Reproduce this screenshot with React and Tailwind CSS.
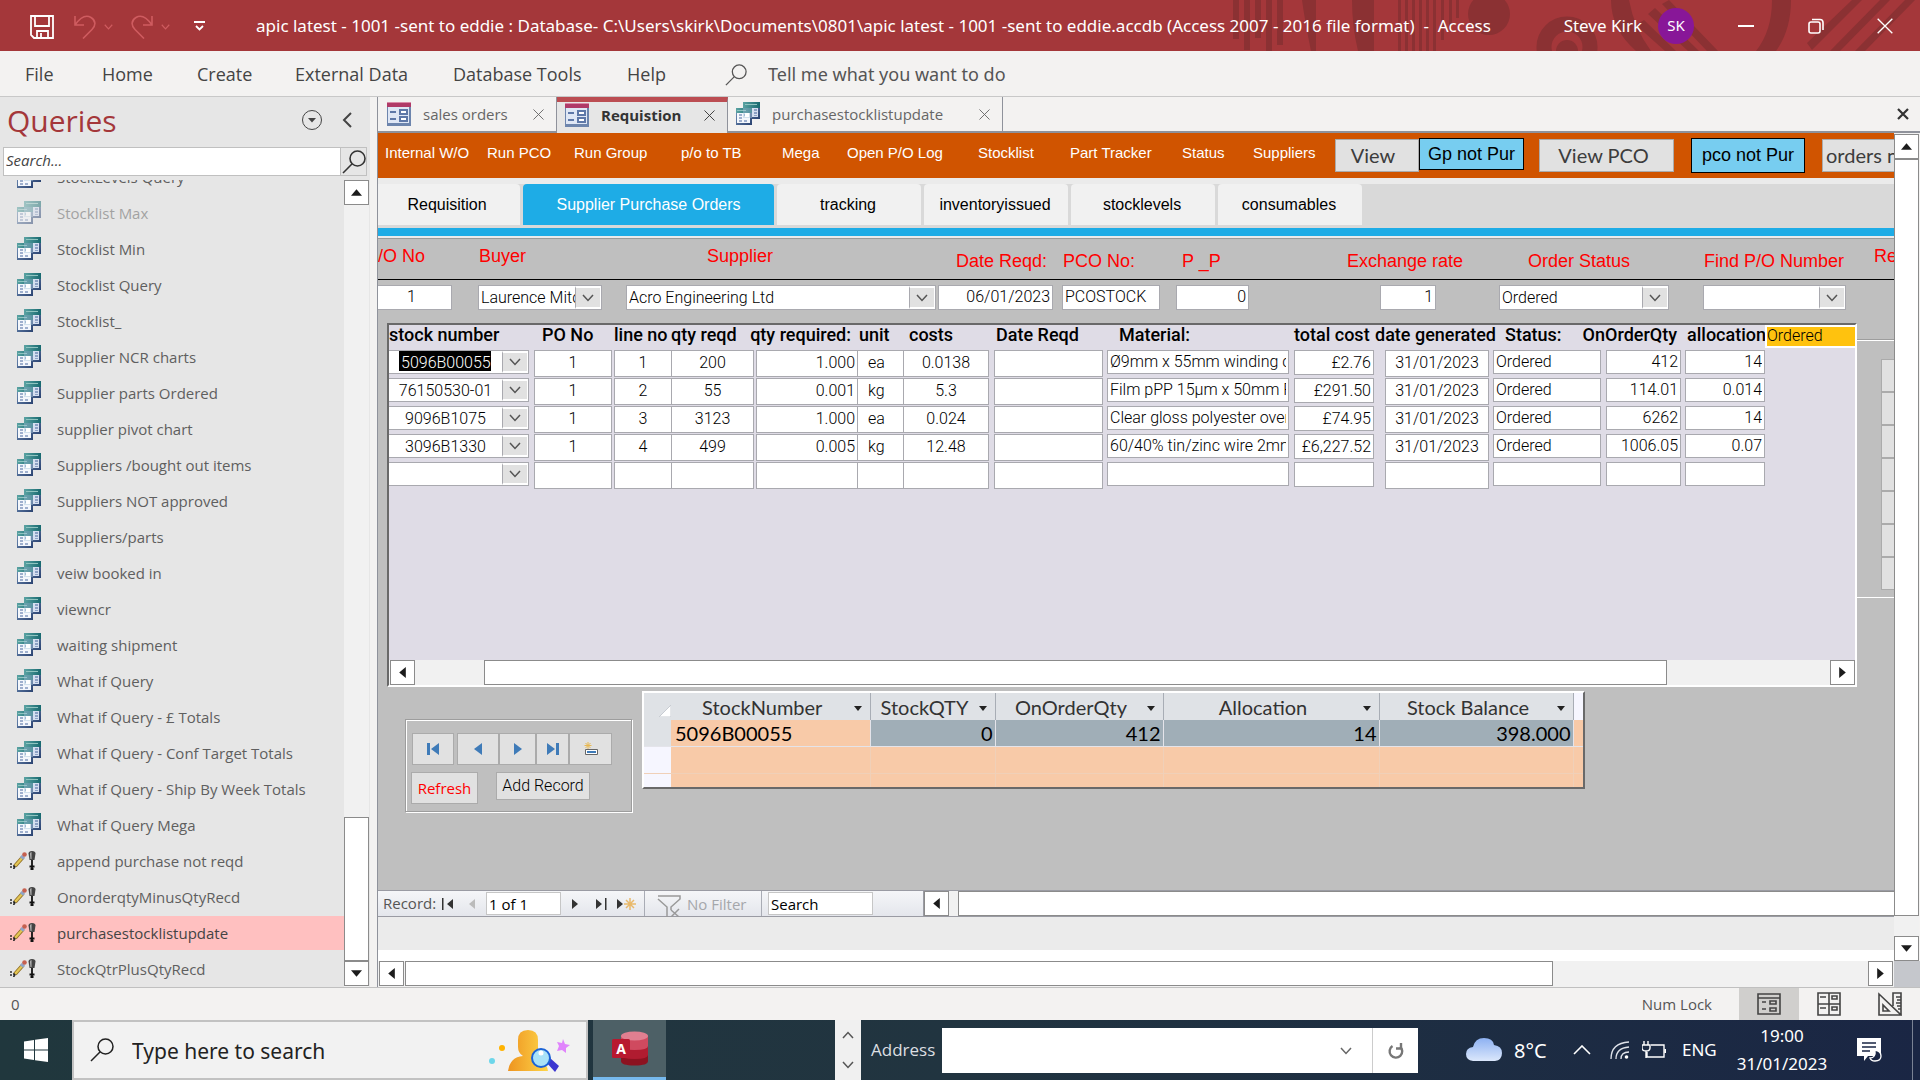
// src/App.jsx
import React from 'react';

const menuItems = [
  { label: 'File', width: 'w-[77px]' },
  { label: 'Home', width: 'w-[95px]' },
  { label: 'Create', width: 'w-[98px]' },
  { label: 'External Data', width: 'w-[158px]' },
  { label: 'Database Tools', width: 'w-[174px]' },
  { label: 'Help', width: 'w-[98px]' },
];

const queries = [
  { name: 'StockLevels Query' },
  { name: 'Stocklist Max', faded: true },
  { name: 'Stocklist Min' },
  { name: 'Stocklist Query' },
  { name: 'Stocklist_' },
  { name: 'Supplier NCR charts' },
  { name: 'Supplier parts Ordered' },
  { name: 'supplier pivot chart' },
  { name: 'Suppliers /bought out items' },
  { name: 'Suppliers NOT approved' },
  { name: 'Suppliers/parts' },
  { name: 'veiw booked in' },
  { name: 'viewncr' },
  { name: 'waiting shipment' },
  { name: 'What if Query' },
  { name: 'What if Query - £ Totals' },
  { name: 'What if Query - Conf Target Totals' },
  { name: 'What if Query - Ship By Week Totals' },
  { name: 'What if Query Mega' },
  { name: 'append purchase not reqd', update: true },
  { name: 'OnorderqtyMinusQtyRecd', update: true },
  { name: 'purchasestocklistupdate', update: true, active: true },
  { name: 'StockQtrPlusQtyRecd', update: true },
];

const toolbarLinks = [
  { label: 'Internal W/O', width: 'w-[102px]' },
  { label: 'Run PCO', width: 'w-[87px]' },
  { label: 'Run Group', width: 'w-[107px]' },
  { label: 'p/o to TB', width: 'w-[101px]' },
  { label: 'Mega', width: 'w-[65px]' },
  { label: 'Open P/O Log', width: 'w-[131px]' },
  { label: 'Stocklist', width: 'w-[92px]' },
  { label: 'Part Tracker', width: 'w-[112px]' },
  { label: 'Status', width: 'w-[71px]' },
  { label: 'Suppliers', width: 'w-[82px]' },
];

// col = column width, head = header alignment, box = the text box in each row
const columns = [
  { title: 'stock number', col: 'w-[145px]', head: '', box: 'w-[140px] h-6' },
  { title: 'PO No', col: 'w-[80px]', head: 'pl-2', box: 'w-[78px] h-[27px] pb-0.5 text-center' },
  { title: 'line no', col: 'w-[57px]', head: '', box: 'w-[58px] h-[27px] pb-0.5 text-center' },
  { title: 'qty reqd', col: 'w-[85px]', head: '', box: 'w-[83px] h-[27px] pb-0.5 text-center' },
  { title: 'qty required:', col: 'w-[101px]', head: 'justify-end pr-1.5', box: 'w-[102px] h-[27px] pb-0.5 text-right' },
  { title: 'unit', col: 'w-[46px]', head: 'pl-0.5', box: 'w-[47px] h-[27px] pb-0.5 pl-2.5' },
  { title: 'costs', col: 'w-[91px]', head: 'pl-1.5', box: 'w-[86px] h-[27px] pb-0.5 text-center' },
  { title: 'Date Reqd', col: 'w-[113px]', head: 'pl-0.5', box: 'w-[109px] h-[27px]' },
  { title: 'Material:', col: 'w-[187px]', head: 'pl-3', box: 'w-[182px] h-6' },
  { title: 'total cost', col: 'w-[91px]', head: '', box: 'w-[80px] h-[25px] text-right' },
  { title: 'date generated', col: 'w-[108px]', head: '-ml-2.5', box: 'w-[104px] h-[27px] pb-0.5 text-center' },
  { title: 'Status:', col: 'w-[113px]', head: 'pl-3', box: 'w-[108px] h-6' },
  { title: 'OnOrderQty', col: 'w-[79px]', head: 'justify-end pr-2', box: 'w-[75px] h-6 text-right' },
  { title: 'allocation', col: 'w-[80px]', head: 'pl-0.5', box: 'w-[80px] h-6 text-right' },
];

const rows = [
  ['5096B00055', '1', '1', '200', '1.000', 'ea', '0.0138', '', 'Ø9mm x 55mm winding core', '£2.76', '31/01/2023', 'Ordered', '412', '14'],
  ['76150530-01', '1', '2', '55', '0.001', 'kg', '5.3', '', 'Film pPP 15µm x 50mm Plain', '£291.50', '31/01/2023', 'Ordered', '114.01', '0.014'],
  ['9096B1075', '1', '3', '3123', '1.000', 'ea', '0.024', '', 'Clear gloss polyester overlay', '£74.95', '31/01/2023', 'Ordered', '6262', '14'],
  ['3096B1330', '1', '4', '499', '0.005', 'kg', '12.48', '', '60/40% tin/zinc wire 2mm', '£6,227.52', '31/01/2023', 'Ordered', '1006.05', '0.07'],
  ['', '', '', '', '', '', '', '', '', '', '', '', '', ''],
];

const balanceColumns = [
  { title: 'StockNumber', col: 'w-[199px]', value: '5096B00055' },
  { title: 'StockQTY', col: 'w-[125px]', value: '0' },
  { title: 'OnOrderQty', col: 'w-[168px]', value: '412' },
  { title: 'Allocation', col: 'w-[216px]', value: '14' },
  { title: 'Stock Balance', col: 'w-[194px]', value: '398.000' },
];

function QueryIcon() {
  return (
    <svg className="h-6 w-6 shrink-0" viewBox="0 0 24 24" shapeRendering="crispEdges">
      <defs>
        <linearGradient id="queryHead" x2="1">
          <stop offset="0" stopColor="#5ba3a3" />
          <stop offset="1" stopColor="#17696f" />
        </linearGradient>
        <linearGradient id="queryBody" x2="1" y2="1">
          <stop offset="0" stopColor="#7796bd" />
          <stop offset="1" stopColor="#2a4270" />
        </linearGradient>
      </defs>
      <rect x="7" y="0" width="17" height="17" fill="url(#queryBody)" />
      <rect x="7" y="0" width="17" height="6" fill="url(#queryHead)" />
      <rect x="9" y="2" width="12" height="1" fill="#8fc4c0" />
      <rect x="8" y="6" width="14" height="9" fill="#d5dff0" />
      <path d="M18 7h3v2h-3zM18 10h3v2h-3zM18 13h3v1h-3z" fill="#8ca0c4" />
      <rect x="0" y="6" width="16" height="17" fill="url(#queryBody)" />
      <rect x="0" y="6" width="16" height="5" fill="url(#queryHead)" />
      <rect x="1" y="8" width="9" height="1" fill="#8fc4c0" />
      <rect x="1" y="11" width="13" height="10" fill="#f4f7fc" />
      <path d="M3 12h3v2H3zM8 12h2v2H8zM3 15h3v2H3zM3 18h3v2H3zM8 18h3v2H8z" fill="#9fb0ce" />
      <path d="M7 6h9v10H7z" fill="#a9c6dc" fillOpacity=".45" />
      <path d="M9 11h4v4H9z" fill="#fff" />
    </svg>
  );
}

function UpdateIcon() {
  return (
    <svg className="h-6 w-[27px] shrink-0" viewBox="0 0 27 24">
      <path d="M1 14v6M4 16v4" stroke="#222" strokeWidth="1.4" strokeDasharray="2 1" />
      <path d="M5 17 13 8" stroke="#8d6a1e" strokeWidth="4" />
      <path d="M5 17 13 8" stroke="#e3c655" strokeWidth="2.400" />
      <path d="M11.500 9.500 13.500 7" stroke="#8fa5c8" strokeWidth="4" />
      <circle cx="14.500" cy="5.500" r="2.300" fill="#c5604f" />
      <path d="m3 20 1-4 2 2z" fill="#222" />
      <path d="M18.500 4.500q0-2.500 3.500-2.500t3.500 2.500l-1 6.500h-5z" fill="#444" />
      <path d="M20 4.500q.2-1.500 1.500-1.500v7h-1z" fill="#bbb" />
      <path d="M22 11v9M19.500 17.500h5M20.500 20h3" stroke="#111" strokeWidth="1.800" />
    </svg>
  );
}

function FormIcon() {
  return (
    <svg className="h-6 w-6 shrink-0" viewBox="0 0 24 24" shapeRendering="crispEdges">
      <rect width="24" height="24" fill="#6d85ad" />
      <rect width="24" height="5" fill="#b03a68" />
      <rect width="24" height="1" fill="#d98aa8" />
      <rect x="1" y="5" width="21" height="16" fill="#dfe7f5" />
      <path d="M3 9h6v2H3zM3 16h6v2H3z" fill="#5e78a8" />
      <path d="M13 8h7v4h-7zM13 15h7v4h-7z" fill="#fff" stroke="#5e78a8" strokeWidth="2" />
    </svg>
  );
}

const arrowPaths = {
  up: 'M0 8 5 2l5 6z',
  down: 'M0 2 5 8l5-6z',
  left: 'M8 0 2 5l6 5z',
  right: 'M2 0 8 5l-6 5z',
};

function ScrollButton({ dir }) {
  return (
    <button aria-label={`Scroll ${dir}`} className="flex h-[25px] w-[25px] shrink-0 items-center justify-center border border-[#8b8b8b] bg-white">
      <svg className="h-[11px] w-[11px]" viewBox="0 0 10 10">
        <path d={arrowPaths[dir]} fill="#1c1c1c" />
      </svg>
    </button>
  );
}

function CloseIcon({ className = '' }) {
  return (
    <svg className={className} viewBox="0 0 12 12" fill="none" stroke="currentColor">
      <path d="m.5.5 11 11M11.500.5l-11 11" />
    </svg>
  );
}

function SearchIcon({ className = '', strokeWidth = 1.6 }) {
  return (
    <svg className={className} viewBox="0 0 24 24" fill="none" stroke="currentColor" strokeWidth={strokeWidth}>
      <circle cx="15.500" cy="8.500" r="7.500" />
      <path d="M10.200 13.800 1 23" />
    </svg>
  );
}

function Chevron({ className = '' }) {
  return (
    <svg className={className} viewBox="0 0 12 8" fill="none" stroke="currentColor" strokeWidth="1.500">
      <path d="m1 1 5 5.500L11 1" />
    </svg>
  );
}

function Combo({ id, label, value, className = '', selectClass = 'flex-1' }) {
  return (
    <div className={`flex border border-[#a9a9af] bg-white ${className}`}>
      <select id={id} aria-label={label} defaultValue={value} className={`min-w-0 appearance-none outline-none ${selectClass}`}>
        <option value={value}>{value}</option>
      </select>
      <span className="flex w-[26px] shrink-0 items-center justify-center border border-y-2 border-white border-l-[#a9a9af] bg-[#e1e1e1]">
        <Chevron className="h-2 w-3 text-[#555]" />
      </span>
    </div>
  );
}

function TitleBar() {
  return (
    <header className="relative flex h-[51px] shrink-0 items-center overflow-hidden bg-[#a4373a] font-['Noto_Sans',sans-serif] text-[17px] text-white">
      <svg className="absolute top-0 right-0 h-[51px] w-[690px]" viewBox="0 0 690 51" fill="#8b3133">
        <path d="M3 0h6v39H3zM14 0h6v50h-6zM25 0h6v38h-6zM36 0h6v51h-6zM47 0h6v45h-6z" />
        <path d="M72 0h14v51h-5Q75 22 72 0zM122 0h22v51h-16q-6-25-6-51z" />
        <path d="M168 0h3v51h-3zM175 0h3v51h-3zM182 0h3v51h-3zM189 0h3v51h-3zM196 0h3v51h-3zM203 0h3v51h-3zM211 0h3v40h-3zM219 0h3v30h-3zM226 0h3v18h-3z" />
        <circle cx="259" cy="14" r="21" />
        <circle cx="337" cy="47" r="23" fill="none" stroke="#8b3133" strokeWidth="15" />
        <circle cx="337" cy="51" r="11" />
        <path d="M381 0h18q5 28 22 51h-15q-25-22-25-51z" />
        <path d="m406 25 8-5 32 31h-11zM418 14l7-6 44 43h-11zM432 4l7-4 49 51h-11z" />
        <path d="M542 0h19q0 30-15 51h-20q16-20 16-51zM577 43l45-43h10l-50 50zM600 51l50-51h10l-50 51zM625 51l50-51h10l-50 51z" />
      </svg>
      <div className="relative flex w-[256px] shrink-0 items-center pt-0.5 pl-[30px]">
        <button aria-label="Save">
          <svg className="h-6 w-6" viewBox="0 0 24 24" fill="none" stroke="#fff" strokeWidth="1.800">
            <path d="M1 1h22v22H4l-3-3zM5 1v10h14V1M7 23v-7h11v7M11 18v5" />
          </svg>
        </button>
        <button aria-label="Undo" className="ml-5 flex items-center gap-2 text-[#cf5c60]">
          <svg className="h-6 w-[22px]" viewBox="0 0 22 24" fill="none" stroke="currentColor" strokeWidth="1.600">
            <path d="M1 1v9h9M1 10C6 3 12-.5 17 2.500s5 8 1 12L9 23.500" />
          </svg>
          <Chevron className="h-2 w-[9px]" />
        </button>
        <button aria-label="Redo" className="ml-[18px] flex items-center gap-2 text-[#cf5c60]">
          <svg className="h-6 w-[22px]" viewBox="0 0 22 24" fill="none" stroke="currentColor" strokeWidth="1.600">
            <path d="M21 1v9h-9M21 10C16 3 10-.5 5 2.500s-5 8-1 12l9 9" />
          </svg>
          <Chevron className="h-2 w-[9px]" />
        </button>
        <button aria-label="Customize toolbar" className="ml-6">
          <svg className="h-[11px] w-[11px]" viewBox="0 0 11 11" fill="none" stroke="#fff" strokeWidth="1.800">
            <path d="M0 1h11M2 5l3.500 3.500L9 5" />
          </svg>
        </button>
      </div>
      <h1 className="relative whitespace-pre">
        apic latest - 1001 -sent to eddie : Database- C:\Users\skirk\Documents\0801\apic latest - 1001 -sent to eddie.accdb (Access 2007 - 2016 file format)  -  Access
      </h1>
      <div className="relative ml-auto flex items-center">
        <span>Steve Kirk</span>
        <span className="ml-4 flex h-9 w-9 items-center justify-center rounded-full bg-[#881798] text-[15px]">SK</span>
        <button aria-label="Minimize" className="ml-11 h-0.5 w-4 bg-white" />
        <button aria-label="Restore" className="ml-[54px]">
          <svg className="h-4 w-4" viewBox="0 0 16 16" fill="none" stroke="#fff" strokeWidth="1.600">
            <rect x="1" y="4" width="11" height="11" rx="2" />
            <path d="M4 1.500h8q3 0 3 3V12" />
          </svg>
        </button>
        <button aria-label="Close" className="mr-[27px] ml-[53px]">
          <CloseIcon className="h-4 w-4" />
        </button>
      </div>
    </header>
  );
}

function Sidebar() {
  return (
    <aside className="flex w-[370px] shrink-0 flex-col bg-[#e6e6e6] text-[#5f5f5f]">
      <div className="flex h-[50px] shrink-0 items-center pb-1 pl-[7px]">
        <h2 className="text-[30px] text-[#a4373a]">Queries</h2>
        <button aria-label="Choose category" className="mr-5 ml-auto flex h-5 w-5 items-center justify-center rounded-full border border-[#444]">
          <svg className="h-2 w-2" viewBox="0 0 8 8">
            <path d="M0 2h8L4 6.500z" fill="#444" />
          </svg>
        </button>
        <button aria-label="Collapse pane" className="mr-[18px]">
          <svg className="h-4 w-[10px]" viewBox="0 0 10 16" fill="none" stroke="#444" strokeWidth="2">
            <path d="M9 1 2 8l7 7" />
          </svg>
        </button>
      </div>
      <div className="mx-[3px] flex h-[29px] shrink-0 border border-[#c0c0c0] bg-white">
        <input aria-label="Search queries" placeholder="Search..." className="min-w-0 flex-1 px-0.5 pb-0.5 text-[15px] italic outline-none placeholder:text-[#444]" />
        <button aria-label="Search" className="flex w-[26px] items-center justify-center border-l border-[#c0c0c0] bg-[#e6e6e6] text-[#333]">
          <SearchIcon className="h-6 w-6" />
        </button>
      </div>
      <div className="mt-1 flex min-h-0 flex-1">
        <ul className="flex min-w-0 flex-1 flex-col justify-end overflow-hidden">
          {queries.map((q) => (
            <li key={q.name} className="h-9 shrink-0 py-px">
              <a
                href="#"
                className={`flex h-[34px] items-center text-[15px] ${q.active ? 'bg-[#ffc0c0] text-[#444]' : ''} ${q.faded ? 'opacity-50' : ''}`}
              >
                <span className={`flex w-[57px] shrink-0 ${q.update ? 'pl-2.5' : 'pl-[17px]'}`}>
                  {q.update ? <UpdateIcon /> : <QueryIcon />}
                </span>
                {q.name}
              </a>
            </li>
          ))}
        </ul>
        <div className="mr-px flex w-[25px] flex-col bg-[#f1f1f1] pb-px">
          <ScrollButton dir="up" />
          <div className="mt-auto h-[144px] border border-[#8b8b8b] bg-white" />
          <ScrollButton dir="down" />
        </div>
      </div>
    </aside>
  );
}

function DocumentTabs() {
  return (
    <nav className="flex h-9 shrink-0 border-b-2 border-[#8f929b] bg-[#f3f2f1] text-[15px] text-[#666]">
      <a href="#" className="flex w-[179px] items-center border-r border-[#8f929b] pl-[9px]">
        <FormIcon />
        <span className="ml-3">sales orders</span>
        <CloseIcon className="mr-3 ml-auto h-[11px] w-[11px]" />
      </a>
      <a href="#" className="-mb-0.5 flex w-[171px] items-center border-t-[5px] border-r border-t-[#bb4d52] border-r-[#8f929b] bg-[#e6e6e6] pb-[5px] pl-2 font-bold text-[#333]">
        <FormIcon />
        <span className="ml-3">Requistion</span>
        <CloseIcon className="mr-3 ml-auto h-[11px] w-[11px]" />
      </a>
      <a href="#" className="flex w-[275px] items-center border-r border-[#8f929b] pl-2">
        <QueryIcon />
        <span className="ml-3">purchasestocklistupdate</span>
        <CloseIcon className="mr-3 ml-auto h-[11px] w-[11px]" />
      </a>
      <button aria-label="Close all" className="mr-[11px] ml-auto text-black">
        <svg className="h-3 w-3" viewBox="0 0 12 12" stroke="#333" strokeWidth="2.200">
          <path d="m1 1 10 10M11 1 1 11" />
        </svg>
      </button>
    </nav>
  );
}

function Toolbar() {
  const grey = 'mt-px h-[33px] border border-[#ababab] bg-[#e1e1e1] pb-0.5 font-[Lato,sans-serif]';
  return (
    <div className="flex h-[45px] shrink-0 items-start overflow-hidden bg-[#d05400] pl-[7px] font-['Liberation_Sans',sans-serif] text-[15px] text-white">
      {toolbarLinks.map((item) => (
        <a key={item.label} href="#" className={`mt-2 shrink-0 leading-6 whitespace-nowrap ${item.width}`}>
          {item.label}
        </a>
      ))}
      <div className="mt-[5px] flex shrink-0 items-start text-[20px] text-[#3c3c3c]">
        <button className={`w-[84px] pr-2 ${grey}`}>View</button>
        <button className="h-8 w-[105px] border border-black bg-[#77cdf0] text-[18px] text-black">Gp not Pur</button>
        <button className={`ml-[15px] w-[135px] pr-1.5 ${grey}`}>View PCO</button>
        <button className="ml-[17px] h-[35px] w-[114px] border border-black bg-[#77cdf0] text-[18px] text-black">pco not Pur</button>
        <button className={`ml-[17px] w-[135px] pl-[3px] text-left ${grey}`}>orders not</button>
      </div>
    </div>
  );
}

function PageTabs() {
  return (
    <nav className="shrink-0 border-t-[6px] border-[#ebebeb] bg-[#d9d9d9] font-['Liberation_Sans',sans-serif] text-[16px] text-black">
      <div className="flex h-11 items-start gap-[3px] leading-[42px]">
        <a href="#" className="h-[41px] w-[142px] rounded-tr bg-[#f1f1f1] pr-1 text-center">Requisition</a>
        <a href="#" className="h-[41px] w-[251px] rounded-t bg-[#1eace6] text-center text-white">Supplier Purchase Orders</a>
        <a href="#" className="h-[41px] w-[144px] rounded-t bg-[#f1f1f1] pr-0.5 text-center">tracking</a>
        <a href="#" className="h-[41px] w-[144px] rounded-t bg-[#f1f1f1] pr-0.5 text-center">inventoryissued</a>
        <a href="#" className="h-[41px] w-[144px] rounded-t bg-[#f1f1f1] pr-0.5 text-center">stocklevels</a>
        <a href="#" className="h-[41px] w-[144px] rounded-t bg-[#f1f1f1] pr-0.5 text-center">consumables</a>
      </div>
      <div className="h-2 bg-[#1eace6]" />
      <div className="h-[3px] border-b border-[#9a9a9a] bg-[#ebebeb]" />
    </nav>
  );
}

function OrderHeader() {
  const box = 'h-[25px] shrink-0 border border-[#a9a9af] bg-white px-0.5 pb-0.5 outline-none';
  return (
    <div className="shrink-0 overflow-hidden">
      <div className="flex h-[41px] items-start border-b border-black pt-[5px] font-['Liberation_Sans',sans-serif] text-[18px] leading-6 whitespace-nowrap text-[#ff0000]">
        <label htmlFor="po" className="-ml-3 w-[113px] shrink-0">P/O No</label>
        <label htmlFor="buyer" className="w-[228px] shrink-0">Buyer</label>
        <label htmlFor="supplier" className="w-[249px] shrink-0">Supplier</label>
        <div className="flex flex-1 pt-[5px]">
          <label htmlFor="reqd" className="w-[107px] shrink-0">Date Reqd:</label>
          <label htmlFor="pco" className="w-[119px] shrink-0">PCO No:</label>
          <label htmlFor="pp" className="w-[165px] shrink-0">P _P</label>
          <label htmlFor="rate" className="w-[181px] shrink-0">Exchange rate</label>
          <label htmlFor="status" className="w-[176px] shrink-0">Order Status</label>
          <label htmlFor="find" className="w-[170px] shrink-0">Find P/O Number</label>
        </div>
        <span className="w-5 shrink-0 overflow-hidden">Re</span>
      </div>
      <div className="flex h-[43px] pt-[5px] font-[Roboto,sans-serif] text-[16px] font-light text-black">
        <input id="po" defaultValue="1" className={`${box} w-[74px] border-l-0 pr-2 text-center`} />
        <Combo id="buyer" value="Laurence Mitchell" selectClass="flex-1 pb-0.5" className="ml-[26px] h-[25px] w-[124px] shrink-0 pl-0.5" />
        <Combo id="supplier" value="Acro Engineering Ltd" selectClass="flex-1 pb-0.5" className="ml-6 h-[25px] w-[310px] shrink-0 pl-0.5" />
        <input id="reqd" defaultValue="06/01/2023" className={`${box} ml-0.5 w-[115px] text-right`} />
        <input id="pco" defaultValue="PCOSTOCK" className={`${box} ml-[9px] w-[98px]`} />
        <input id="pp" defaultValue="0" className={`${box} ml-4 w-[73px] text-right`} />
        <input id="rate" defaultValue="1" className={`${box} ml-[131px] w-[56px] text-right`} />
        <Combo id="status" value="Ordered" selectClass="flex-1 pb-0.5" className="ml-[63px] h-[25px] w-[170px] shrink-0 pl-0.5" />
        <Combo id="find" value="" className="ml-[34px] h-[25px] w-[143px] shrink-0" />
      </div>
    </div>
  );
}

function Subform() {
  return (
    <section className="flex h-[364px] min-w-0 flex-1 flex-col border-2 border-t-[#696969] border-r-white border-b-white border-l-[#696969] bg-[#dfdce6] font-[Roboto,sans-serif] text-[16px] text-black">
      <div className="flex flex-1 items-start overflow-hidden">
        <table className="w-[1376px] shrink-0 table-fixed border-collapse">
          <thead>
            <tr>
              {columns.map((c) => (
                <th key={c.title} className={`h-[25px] p-0 align-top font-medium ${c.col}`}>
                  <div className={`flex text-[18px] leading-5 whitespace-nowrap ${c.head}`}>{c.title}</div>
                </th>
              ))}
            </tr>
          </thead>
          <tbody className="font-light">
            {rows.map((row, r) => (
              <tr key={r}>
                {row.map((value, i) => (
                  <td key={i} className="h-7 p-0 align-top">
                    {i === 0 ? (
                      <Combo
                        label="stock number"
                        value={value}
                        className={`justify-end border-l-0 ${columns[i].box}`}
                        selectClass={r === 0 ? 'mr-auto ml-2.5 h-5 w-[92px] bg-black pl-0.5 text-white' : 'flex-1 text-center'}
                      />
                    ) : (
                      <input
                        aria-label={columns[i].title}
                        defaultValue={value}
                        className={`block border border-[#a9a9af] bg-white px-0.5 outline-none ${columns[i].box}`}
                      />
                    )}
                  </td>
                ))}
              </tr>
            ))}
          </tbody>
        </table>
        <input aria-label="Order status filter" defaultValue="Ordered" className="h-[23px] min-w-0 flex-1 border-2 border-r-0 border-white bg-[#ffc20e] pb-0.5 font-light outline-none" />
      </div>
      <div className="flex h-[25px] shrink-0 bg-[#f1f1f1] pl-px">
        <ScrollButton dir="left" />
        <div className="ml-[69px] h-[25px] flex-1 border border-[#8b8b8b] bg-white" />
        <div className="w-[163px]" />
        <ScrollButton dir="right" />
      </div>
    </section>
  );
}

function SideButtons() {
  return (
    <div className="mt-[17px] flex h-[258px] w-[37px] shrink-0 flex-col items-end overflow-hidden border-y border-white pt-[18px] shadow-[0_-1px_0_#9d9d9d]">
      {['First', 'Previous', 'Next', 'Last', 'New', 'Save', 'Delete'].map((name) => (
        <button key={name} aria-label={name} className="h-[33px] w-[13px] shrink-0 border border-r-0 border-[#ababab] bg-[#e1e1e1]" />
      ))}
    </div>
  );
}

function NavigationBox() {
  const button = 'flex h-8 items-center justify-center border border-[#ababab] bg-[#e1e1e1]';
  return (
    <div className="mt-8 ml-[27px] h-[93px] w-[227px] shrink-0 border border-[#9d9d9d] shadow-[1px_1px_0_#fff,inset_1px_1px_0_#fff]">
      <div className="mt-[13px] ml-1.5 flex">
        <button aria-label="First record" className={`${button} mr-[3px] w-[42px]`}>
          <svg className="h-3 w-3" viewBox="0 0 12 12" fill="#3f7bb8"><path d="M0 0h3v12H0zM12 0v12L4 6z" /></svg>
        </button>
        <button aria-label="Previous record" className={`${button} w-[42px]`}>
          <svg className="h-3 w-3" viewBox="0 0 12 12" fill="#3f7bb8"><path d="M10 0v12L2 6z" /></svg>
        </button>
        <button aria-label="Next record" className={`${button} w-[37px]`}>
          <svg className="h-3 w-3" viewBox="0 0 12 12" fill="#3f7bb8"><path d="M2 0v12l8-6z" /></svg>
        </button>
        <button aria-label="Last record" className={`${button} w-[33px]`}>
          <svg className="h-3 w-3" viewBox="0 0 12 12" fill="#3f7bb8"><path d="M0 0v12l8-6zM9 0h3v12H9z" /></svg>
        </button>
        <button aria-label="New record" className={`${button} w-[43px]`}>
          <svg className="h-[14px] w-[14px]" viewBox="0 0 14 14">
            <path d="M4 0v7M.5 3.500h7M1.500 1l5 5M6.500 1l-5 5" stroke="#e8b850" />
            <path d="M1.500 7.500h12v5h-12z" fill="#fff" stroke="#666" />
            <path d="M3 9h9v2H3z" fill="#3f7bb8" />
          </svg>
        </button>
      </div>
      <div className="mt-[7px] ml-[5px] flex items-start">
        <button className="h-8 w-[67px] border border-[#ababab] bg-[#e1e1e1] text-[15px] text-[#ff0000]">Refresh</button>
        <button className="ml-[18px] h-7 w-[94px] border border-[#ababab] bg-[#e1e1e1] font-[Roboto,sans-serif] text-[16px] font-light whitespace-nowrap text-black">Add Record</button>
      </div>
    </div>
  );
}

function StockBalance() {
  return (
    <div className="mt-1 ml-[10px] h-[98px] w-[943px] overflow-hidden border-2 border-t-white border-r-[#696969] border-b-[#696969] border-l-white bg-[#f8caa8] font-[Lato,sans-serif] text-[20px] leading-6">
      <table className="w-full table-fixed border-collapse">
        <thead>
          <tr className="h-[27px] bg-[#dfe2e6] text-[#333]">
            <th className="w-[27px] p-0">
              <svg className="mt-2 ml-auto h-3 w-3" viewBox="0 0 12 12"><path d="M12 0v12H0z" fill="#fff" stroke="#c8ccd2" /></svg>
            </th>
            {balanceColumns.map((c) => (
              <th key={c.title} className={`border-r border-[#a8adb5] p-0 font-normal ${c.col}`}>
                <div className="flex items-center pr-2">
                  <span className="flex-1 text-center whitespace-nowrap">{c.title}</span>
                  <svg className="mt-1 h-[5px] w-2" viewBox="0 0 8 5"><path d="M0 0h8L4 5z" fill="#222" /></svg>
                </div>
              </th>
            ))}
            <th className="bg-[#f6f6ff] p-0" />
          </tr>
        </thead>
        <tbody>
          <tr className="h-[26px] border-b border-[#e4e4ea] text-black">
            <td className="bg-[#dfe2e6] p-0" />
            {balanceColumns.map((c, i) => (
              <td key={c.title} className={`border-r border-[#e4e4ea] py-0 ${i === 0 ? 'pr-0.5 pl-1' : 'bg-[#a0aeb7] px-0.5 text-right'}`}>
                {c.value}
              </td>
            ))}
            <td className="p-0" />
          </tr>
          {[0, 1].map((n) => (
            <tr key={n} className="h-[27px] border-b border-[#f0d0b8]">
              <td className="bg-[#f6f6ff] p-0" />
              {balanceColumns.map((c) => (
                <td key={c.title} className="border-r border-[#f0d0b8] p-0" />
              ))}
              <td className="p-0" />
            </tr>
          ))}
        </tbody>
      </table>
    </div>
  );
}

function RecordBar() {
  return (
    <div className="flex h-[27px] shrink-0 items-center border-y border-[#9a9ba3] bg-[#e9eaef] text-[15px] text-[#555]">
      <div className="flex h-full w-[545px] shrink-0 items-center bg-gradient-to-b from-[#f5f6f8] to-[#e4e6ec] pl-[5px]">
        <label htmlFor="record" className="w-[59px]">Record:</label>
        <svg className="h-3 w-3" viewBox="0 0 12 12" fill="#333"><path d="M0 0h1.500v12H0zM11 1v10L5 6z" /></svg>
        <svg className="ml-3 h-3 w-3" viewBox="0 0 12 12" fill="#bbb"><path d="M9 1v10L3 6z" /></svg>
        <input id="record" defaultValue="1 of 1" className="ml-2 h-[23px] w-[75px] border border-[#c6c6c6] bg-white px-0.5 text-black outline-none" />
        <svg className="ml-2 h-3 w-3" viewBox="0 0 12 12" fill="#333"><path d="M3 1v10l6-5z" /></svg>
        <svg className="ml-[14px] h-3 w-3" viewBox="0 0 12 12" fill="#333"><path d="M1 1v10l6-5zM10 0h1.500v12H10z" /></svg>
        <svg className="ml-[9px] h-3 w-5" viewBox="0 0 20 12" fill="#333">
          <path d="M1 1v10l6-5z" />
          <path d="M14 0v12M8 6h12M10 2l8 8M18 2l-8 8" stroke="#e9b96b" strokeWidth="1.500" />
        </svg>
        <button className="ml-2 flex h-full w-[118px] items-center border-x border-[#a9acb5] pl-3 text-[#a5a7ab]">
          <svg className="mt-1 h-6 w-6" viewBox="0 0 24 24" fill="none" stroke="#999" strokeWidth="1.500">
            <path d="M1 2h22v3l-9 8v3M1 5l9 8v11M14 16l8 7M22 15l-8 8" />
          </svg>
          <span className="ml-1.5 pt-0.5 whitespace-nowrap">No Filter</span>
        </button>
        <input aria-label="Search records" defaultValue="Search" className="ml-1.5 h-[23px] w-[105px] border border-[#c6c6c6] bg-white px-0.5 text-black outline-none" />
      </div>
      <div className="flex flex-1 border-l border-[#9a9ba3] bg-[#f1f1f1]">
        <ScrollButton dir="left" />
        <div className="ml-[9px] h-[25px] flex-1 border border-r-0 border-[#8b8b8b] bg-white" />
      </div>
    </div>
  );
}

function StatusBar() {
  return (
    <footer className="flex h-8 shrink-0 items-center bg-[#f3f2f1] pl-[11px] text-[15px] text-[#555]">
      <span>0</span>
      <span className="mr-[27px] ml-auto">Num Lock</span>
      <button aria-label="Form view" className="flex h-full w-[60px] items-center justify-center bg-[#d0cfcd]">
        <svg className="h-[22px] w-6" viewBox="0 0 24 22" fill="none" stroke="#444" strokeWidth="1.600">
          <path d="M1 1h22v20H1zM1 5h22M5 9h4M5 16h4M13 8h6v3h-6zM13 15h6v3h-6z" />
        </svg>
      </button>
      <button aria-label="Layout view" className="flex h-full w-[60px] items-center justify-center">
        <svg className="h-6 w-6" viewBox="0 0 24 24" fill="none" stroke="#444" strokeWidth="1.600">
          <path d="M1 1h22v22H1zM12 1v22M1 12h22M3 5h6M3 16h6M15 4h5v3h-5zM15 15h5v3h-5z" />
        </svg>
      </button>
      <button aria-label="Design view" className="flex h-full w-[61px] items-center justify-center">
        <svg className="h-6 w-6" viewBox="0 0 24 24" fill="none" stroke="#444" strokeWidth="1.600">
          <path d="M1 2v21h22zM5 13v6h6zM15 14V1h8v22M18 5h5M19 8h4M18 11h5M19 14h4M20 17h3" />
        </svg>
      </button>
    </footer>
  );
}

function Taskbar() {
  return (
    <div className="flex h-[60px] shrink-0 bg-gradient-to-r from-[#20373d] via-[#213440] to-[#1a2644] font-['Noto_Sans',sans-serif] text-white">
      <button aria-label="Start" className="flex w-[72px] shrink-0 items-center justify-center">
        <svg className="h-6 w-6" viewBox="0 0 24 24" fill="#fff">
          <path d="M0 3.500 10 2v9.500H0zM11 1.800 24 0v11.500H11zM0 12.500h10V22L0 20.500zM11 12.500h13V24l-13-1.800z" />
        </svg>
      </button>
      <label className="flex w-[516px] shrink-0 items-center border-2 border-[#c2c2c2] bg-[#f2f2f2] pl-4 text-[#222]">
        <SearchIcon className="h-6 w-6 shrink-0" strokeWidth={1.5} />
        <input aria-label="Windows search" placeholder="Type here to search" className="ml-[18px] min-w-0 flex-1 pt-1 text-[21px] outline-none placeholder:text-[#222]" />
        <svg className="mr-4 h-11 w-[82px] shrink-0" viewBox="0 0 82 44">
          <defs>
            <linearGradient id="person" x1="0" x2="1">
              <stop offset="0" stopColor="#ee9420" />
              <stop offset="1" stopColor="#fed64a" />
            </linearGradient>
          </defs>
          <circle cx="14" cy="20" r="3" fill="#ffb300" />
          <circle cx="4" cy="33" r="3" fill="#6dd6ea" />
          <path d="M30 12q0-10 10-10t10 10v8q0 8-6 9 14 1 16 14H20q2-14 15-15-5-3-5-9z" fill="url(#person)" />
          <path d="m58 34 4-4 9 8-4 6z" fill="#3c36d0" />
          <circle cx="53" cy="30" r="9" fill="#a9e2f7" stroke="#1b63d6" strokeWidth="2" />
          <circle cx="53" cy="25" r="2.500" fill="#fff" />
          <path d="m75 11 2 5 5 1-4 3 0 5-4-3-5 1 2-5-2-4 5 1z" fill="#e084fc" />
        </svg>
      </label>
      <button aria-label="Access" className="ml-[5px] flex w-[73px] shrink-0 items-center justify-center border-b-[3px] border-[#76b9ed] bg-[#4d6066]">
        <svg className="h-[35px] w-9" viewBox="0 0 36 35">
          <path d="M9 5v25q0 4.500 13.500 4.500T36 30V5z" fill="#8c1220" />
          <path d="M9 5v19q0 4 13.500 4T36 24V5z" fill="#b01c30" />
          <path d="M9 5v10q0 4 13.500 4T36 15V5z" fill="#cf4a5f" />
          <ellipse cx="22.500" cy="5" rx="13.500" ry="4.500" fill="#e07f90" />
          <rect y="8" width="18" height="19" rx="1.500" fill="#b8182f" />
          <text x="9" y="22.500" textAnchor="middle" fontSize="14" fontWeight="bold" fill="#fff">A</text>
        </svg>
      </button>
      <div className="ml-auto flex w-[26px] shrink-0 flex-col items-center justify-between bg-[#f0f0f0] py-2.5 text-[#555]">
        <Chevron className="h-2.5 w-3 rotate-180" />
        <Chevron className="h-2.5 w-3" />
      </div>
      <label htmlFor="address" className="w-[81px] shrink-0 self-center pl-2.5 font-['Open_Sans',sans-serif] text-[17px] text-[#dcdfe2]">Address</label>
      <div className="mt-2 flex h-[45px] w-[476px] shrink-0 items-center bg-white text-[#666]">
        <input id="address" className="min-w-0 flex-1 outline-none" />
        <Chevron className="mr-5 h-2 w-3" />
        <button aria-label="Refresh address" className="flex h-full w-[46px] items-center justify-center border-l border-[#ccc]">
          <svg className="h-[18px] w-[18px]" viewBox="0 0 18 18" fill="none" stroke="#777" strokeWidth="2.400">
            <path d="M12.500 4A6.300 6.300 0 1 1 5 4.500M4 1v5.500h5" transform="matrix(-1 0 0 1 18 0)" />
          </svg>
        </button>
      </div>
      <div className="flex w-[502px] shrink-0 items-center">
        <svg className="ml-12 h-6 w-9" viewBox="0 0 36 24">
          <defs>
            <linearGradient id="cloud" x2="0" y2="1">
              <stop offset="0" stopColor="#8db1f2" />
              <stop offset="1" stopColor="#dbe7fb" />
            </linearGradient>
          </defs>
          <path d="M7 23q-7-1-7-7t7-7Q9 0 18 0t10 7q8 1 8 8t-7 8z" fill="url(#cloud)" />
        </svg>
        <span className="ml-3 w-[59px] pt-0.5 text-[20px]">8°C</span>
        <svg className="h-[10px] w-[18px]" viewBox="0 0 18 10" fill="none" stroke="#fff" strokeWidth="1.600"><path d="m1 9 8-8 8 8" /></svg>
        <svg className="ml-[19px] h-5 w-5" viewBox="0 0 20 20" fill="none" stroke="#dfe3ea" strokeWidth="1.300">
          <path d="M1 19Q1 3 19 2M6 19Q6 8 19 7M11 19q0-7 8-7" />
          <circle cx="16.500" cy="17" r="1.800" fill="#fff" stroke="none" />
        </svg>
        <svg className="ml-3 h-[18px] w-6" viewBox="0 0 24 18" fill="none" stroke="#fff" strokeWidth="1.400">
          <path d="M9 4h13v12H5v-5M23.500 8v4M2 0v4M6 0v4M0 4h8v3q0 3-4 3t-4-3zM4 10v7" />
        </svg>
        <span className="ml-4 w-[34px] text-[17px]">ENG</span>
        <div className="ml-4 w-[100px] text-center text-[17px] leading-7">
          <div>19:00</div>
          <div>31/01/2023</div>
        </div>
        <svg className="ml-[25px] h-6 w-[25px]" viewBox="0 0 25 24">
          <path d="M0 0h24v18H11l-4 5v-5H0z" fill="#fff" />
          <path d="M5 5h14M5 9h14M5 13h8" stroke="#1a2644" strokeWidth="1.500" />
          <path d="M18 12q6 1 6 6t-6 5q-4 0-5-3 6 0 5-8z" fill="#1a2644" stroke="#fff" strokeWidth="1.300" />
        </svg>
        <span className="mr-[7px] ml-auto h-full w-px bg-[#7a8294]" />
      </div>
    </div>
  );
}

function App() {
  return (
    <div className="flex h-screen flex-col overflow-hidden bg-[#f3f2f1] font-['Open_Sans',sans-serif]">
      <TitleBar />
      <nav className="flex h-[46px] shrink-0 items-center border-b border-[#c8c8c8] pt-0.5 pl-[25px] text-[18px] text-[#444]">
        {menuItems.map((item) => (
          <a key={item.label} href="#" className={`shrink-0 whitespace-nowrap ${item.width}`}>
            {item.label}
          </a>
        ))}
        <label className="flex items-center font-['Noto_Sans',sans-serif] text-[#555]">
          <SearchIcon className="h-[22px] w-[22px]" strokeWidth={1.4} />
          <input aria-label="Tell me" placeholder="Tell me what you want to do" className="ml-[21px] w-[300px] outline-none placeholder:text-[#555]" />
        </label>
      </nav>

      <div className="flex min-h-0 flex-1 border-b border-[#c0c0c0]">
        <Sidebar />
        <main className="ml-[7px] flex min-w-0 flex-1 flex-col border-l border-[#8f929b]">
          <DocumentTabs />
          <div className="flex min-h-0 flex-1">
            <div className="flex min-w-0 flex-1 flex-col overflow-hidden bg-[#bfbfbf]">
              <Toolbar />
              <PageTabs />
              <OrderHeader />
              <div className="flex shrink-0 pl-[9px]">
                <Subform />
                <SideButtons />
              </div>
              <div className="flex flex-1 items-start">
                <NavigationBox />
                <StockBalance />
              </div>
              <RecordBar />
              <div className="h-[33px] shrink-0 bg-[#ebebeb]" />
              <div className="h-[11px] shrink-0 bg-white" />
            </div>
            <div className="mr-px flex w-[25px] shrink-0 flex-col bg-[#f1f1f1] pt-px">
              <ScrollButton dir="up" />
              <div className="mb-5 flex-1 border border-[#8b8b8b] bg-white" />
              <ScrollButton dir="down" />
            </div>
          </div>
          <div className="flex h-[26px] shrink-0 bg-[#f1f1f1] pl-px">
            <ScrollButton dir="left" />
            <div className="ml-px h-[25px] flex-1 border border-[#8b8b8b] bg-white" />
            <div className="w-[315px] shrink-0" />
            <ScrollButton dir="right" />
            <div className="ml-px w-[26px] bg-[#c5c7cc]" />
          </div>
        </main>
      </div>

      <StatusBar />
      <Taskbar />
    </div>
  );
}

export default App;
